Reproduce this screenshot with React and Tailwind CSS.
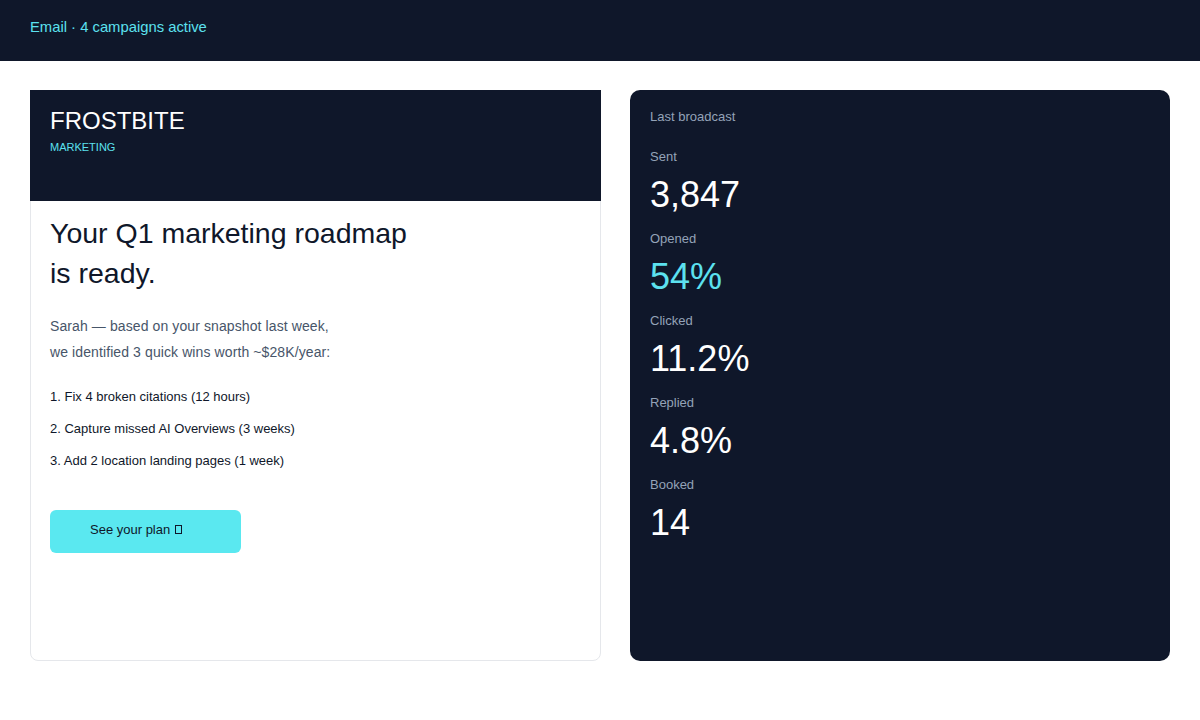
import React from 'react'

const stats = [
  { label: 'Sent', value: '3,847' },
  { label: 'Opened', value: '54%', accent: true },
  { label: 'Clicked', value: '11.2%' },
  { label: 'Replied', value: '4.8%' },
  { label: 'Booked', value: '14' },
]

const wins = [
  '1. Fix 4 broken citations (12 hours)',
  '2. Capture missed AI Overviews (3 weeks)',
  '3. Add 2 location landing pages (1 week)',
]

const EmailPreview = () => (
  <div className="w-[571px] h-[571px] shrink-0 rounded-lg border border-[#e5e7eb] bg-white">
    {/* Brand header */}
    <div className="-mx-px -mt-px h-[111px] bg-[#0f172a] px-[20px] pt-[16px]">
      <div className="text-[24px] leading-[30px] text-white">FROSTBITE</div>
      <div className="mt-[4px] text-[11px] leading-[14px] text-[#5ce1ef]">MARKETING</div>
    </div>

    <div className="px-[19px] pt-[12px]">
      <h2 className="text-[28.5px] leading-[40px] text-[#0f172a]">
        Your Q1 marketing roadmap
        <br />
        is ready.
      </h2>
      <p className="mt-[20px] text-[14px] leading-[26px] tracking-[0.1px] text-[#475569]">
        Sarah — based on your snapshot last week,
        <br />
        we identified 3 quick wins worth ~$28K/year:
      </p>
      <ul className="mt-[22px] flex flex-col gap-[12px] text-[13px] leading-[20px] text-[#0f172a]">
        {wins.map((w) => (
          <li key={w}>{w}</li>
        ))}
      </ul>
      <button className="mt-[39px] flex h-[43px] w-[191px] items-center rounded-md bg-[#5ae8f0] pb-[4px] pl-[40px] text-[13px] text-[#0f172a]">
        See your plan
        <span className="ml-[5px] inline-block h-[9px] w-[7px] border border-[#0f172a]" />
      </button>
    </div>
  </div>
)

const Broadcast = () => (
  <div className="w-[540px] h-[571px] shrink-0 rounded-[10px] bg-[#0f172a] px-[20px] pt-[18px]">
    <div className="text-[13px] leading-[18px] text-[#94a3b8]">Last broadcast</div>
    <div className="mt-[22px] flex flex-col">
      {stats.map((s) => (
        <div key={s.label} className="h-[82px]">
          <div className="text-[13px] leading-[18px] text-[#94a3b8]">{s.label}</div>
          <div className={`mt-[8px] text-[36px] leading-[42px] ${s.accent ? 'text-[#5ce1ef]' : 'text-white'}`}>
            {s.value}
          </div>
        </div>
      ))}
    </div>
  </div>
)

export default function App() {
  return (
    <div className="min-h-[720px] bg-white" style={{ fontFamily: '"Liberation Sans", Arial, sans-serif' }}>
      <header className="flex h-[61px] items-center bg-[#0f172a] px-[30px] pb-[6px]">
        <span className="text-[14.8px] text-[#5ce1ef]">Email · 4 campaigns active</span>
      </header>
      <main className="flex gap-[29px] px-[30px] pt-[29px]">
        <EmailPreview />
        <Broadcast />
      </main>
    </div>
  )
}
